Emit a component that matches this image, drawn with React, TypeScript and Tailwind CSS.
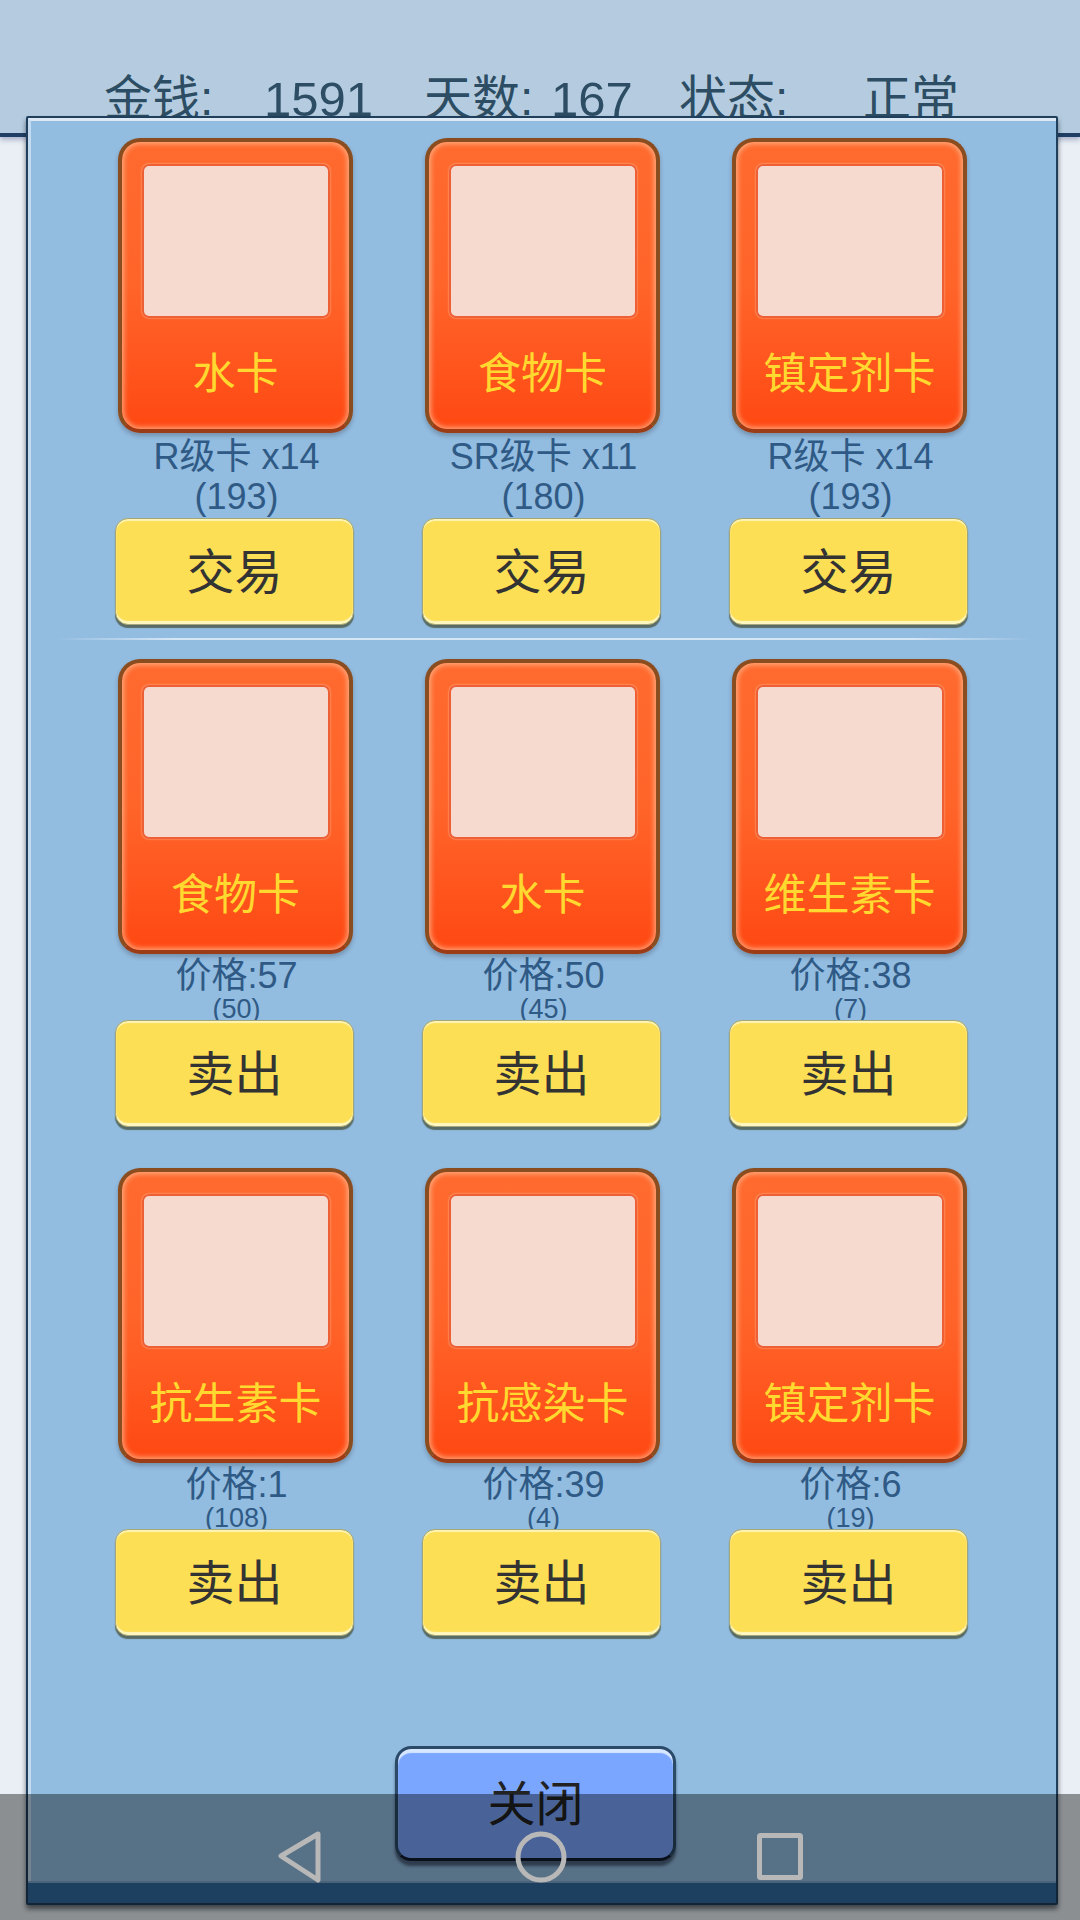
const FONT = "font-['Liberation_Sans','Noto_Sans_CJK_SC',sans-serif]";

type Item = { name: string; line1: string; line2: string };

const buyItems: Item[] = [
  { name: '水卡', line1: 'R级卡 x14', line2: '(193)' },
  { name: '食物卡', line1: 'SR级卡 x11', line2: '(180)' },
  { name: '镇定剂卡', line1: 'R级卡 x14', line2: '(193)' },
];

const sellRowA: Item[] = [
  { name: '食物卡', line1: '价格:57', line2: '(50)' },
  { name: '水卡', line1: '价格:50', line2: '(45)' },
  { name: '维生素卡', line1: '价格:38', line2: '(7)' },
];

const sellRowB: Item[] = [
  { name: '抗生素卡', line1: '价格:1', line2: '(108)' },
  { name: '抗感染卡', line1: '价格:39', line2: '(4)' },
  { name: '镇定剂卡', line1: '价格:6', line2: '(19)' },
];

function Card({ name }: { name: string }) {
  return (
    <div className="ml-[3px] flex h-[295px] w-[235px] flex-col items-center rounded-[22px] border-4 border-[#8a4d20] border-b-[#9c3c16] bg-gradient-to-b from-[#ff6a2e] via-[#ff6429] to-[#ff4812] pt-[22px] shadow-[0_3px_4px_rgba(50,50,60,0.3),inset_0_0_5px_2px_rgba(255,190,150,0.75)]">
      <div className="h-[154px] w-[188px] shrink-0 rounded-[7px] border-2 border-[#ee5f35] bg-[#f6d9cf] shadow-[0_0_2px_rgba(255,220,190,0.9)]" />
      <div className="mt-[32px] text-[43px] leading-[48px] whitespace-nowrap text-[#ffd92f]">{name}</div>
    </div>
  );
}

function ActionButton({ label }: { label: string }) {
  return (
    <div className="relative flex h-[107px] w-[239px] items-center justify-center rounded-[13px] border border-[#a3a67a] bg-[#fcdf55] pt-[2px] text-[48px] text-[#333] shadow-[0_3px_1px_rgba(70,80,60,0.75),inset_0_-3px_1px_rgba(255,250,205,0.9),inset_0_2px_1px_rgba(255,250,205,0.8)]">
      {label}
    </div>
  );
}

function BuyColumn({ item }: { item: Item }) {
  return (
    <div className="flex flex-col">
      <Card name={item.name} />
      <div className="flex h-[85px] flex-col items-center pt-[4px] pl-[4px] text-[36px] leading-[40px] whitespace-nowrap text-[#2f5a85]">
        <div>{item.line1}</div>
        <div>{item.line2}</div>
      </div>
      <ActionButton label="交易" />
    </div>
  );
}

function SellColumn({ item }: { item: Item }) {
  return (
    <div className="flex flex-col">
      <Card name={item.name} />
      <div className="flex h-[66px] flex-col items-center pl-[4px] whitespace-nowrap text-[#2f5a85]">
        <div className="mt-[1px] text-[36px] leading-[42px]">{item.line1}</div>
        <div className="-mt-[3px] text-[27px] leading-[30px]">{item.line2}</div>
      </div>
      <ActionButton label="卖出" />
    </div>
  );
}

function Row({ children }: { children: React.ReactNode }) {
  return <div className="grid grid-cols-[239px_239px_239px] gap-x-[68px] pl-[84px]">{children}</div>;
}

export default function App() {
  return (
    <div className={`relative h-[1920px] w-[1080px] overflow-hidden bg-[#e9eff4] ${FONT}`}>
      {/* top status bar */}
      <div className="flex h-[137px] border-b-4 border-[#1f3f66] bg-[#b5cce0] pt-[71px] pl-[104px] text-[48px] leading-[56px] whitespace-nowrap text-[#2c4d63] shadow-[0_3px_5px_rgba(60,70,130,0.35)]">
        <span className="w-[160px]">金钱:</span>
        <span className="w-[160px] text-[49px]">1591</span>
        <span className="w-[127px]">天数:</span>
        <span className="w-[128px] text-[49px]">167</span>
        <span className="w-[184px]">状态:</span>
        <span>正常</span>
      </div>

      {/* trade dialog */}
      <div className="absolute top-[116px] left-[26px] flex h-[1789px] w-[1032px] flex-col rounded-[2px] border-2 border-[#1f3f5c] bg-[#92bce0] shadow-[0_4px_5px_rgba(20,30,40,0.6)]">
        <div className="flex flex-1 flex-col border-t-[3px] border-l-[3px] border-t-[#dce9f5] border-l-[#c4daee] pt-[17px]">
          <Row>
            {buyItems.map((item, i) => (
              <BuyColumn key={i} item={item} />
            ))}
          </Row>
          <div className="mt-[13px] mr-[24px] ml-[24px] h-[2px] bg-[linear-gradient(to_right,transparent,#d5e6f5_12%,#d5e6f5_88%,transparent)]" />
          <div className="h-[19px]" />
          <Row>
            {sellRowA.map((item, i) => (
              <SellColumn key={i} item={item} />
            ))}
          </Row>
          <div className="h-[41px]" />
          <Row>
            {sellRowB.map((item, i) => (
              <SellColumn key={i} item={item} />
            ))}
          </Row>
          <div className="mt-auto mb-[20px] ml-[364px] flex h-[115px] w-[281px] items-center justify-center rounded-[16px] border-[3px] border-[#2b4a68] border-b-[#101c2e] bg-[#7ba6ff] pt-[2px] text-[48px] text-[#222] shadow-[0_5px_3px_rgba(20,30,50,0.55),inset_0_4px_1px_rgba(225,238,255,0.9)]">
            关闭
          </div>
        </div>
        <div className="h-[22px] shrink-0 border-t-2 border-[#7ea6cb] bg-[#336ba0]" />
      </div>

      {/* android nav bar */}
      <div className="absolute right-0 bottom-0 left-0 flex h-[126px] items-start gap-[195px] bg-black/40 pt-[37px] pl-[278px]">
        <svg width="43" height="52" viewBox="0 0 43 52" fill="none" stroke="#b8b8b8" strokeWidth="5" strokeLinejoin="round">
          <path d="M40 3 L3 25 L40 49 Z" />
        </svg>
        <svg width="52" height="52" viewBox="0 0 52 52" fill="none" stroke="#b8b8b8" strokeWidth="5" className="-ml-[1px]">
          <circle cx="26" cy="26" r="23" />
        </svg>
        <svg width="46" height="47" viewBox="0 0 46 47" fill="none" stroke="#b8b8b8" strokeWidth="5" strokeLinejoin="round" className="-ml-[5px] mt-[2px]">
          <rect x="2.5" y="2.5" width="41" height="42" rx="1" />
        </svg>
      </div>
    </div>
  );
}
